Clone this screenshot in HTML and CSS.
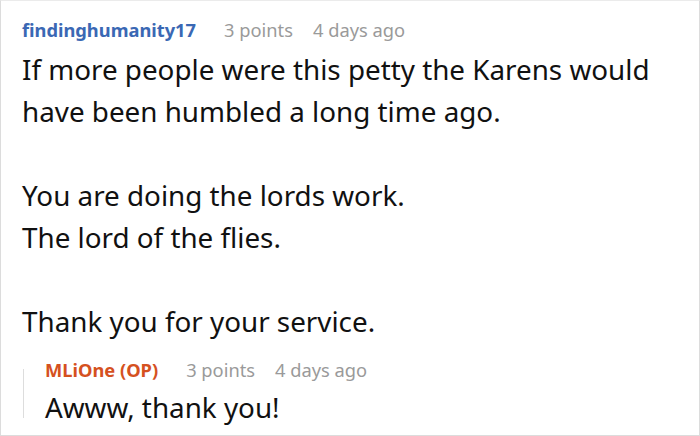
FILE: index.html
```html
<!DOCTYPE html>
<html>
<head>
<meta charset="utf-8">
<link rel="stylesheet" href="styles.css">
</head>
<body>
<div class="frame">
  <div class="comment">
    <div class="meta">
      <span class="author">findinghumanity17</span>
      <span class="info">3 points</span>
      <span class="info">4 days ago</span>
    </div>
    <div class="text">
      <p>If more people were this petty the Karens would have been humbled a long time ago.</p>
      <p>You are doing the lords work.<br>The lord of the flies.</p>
      <p>Thank you for your service.</p>
    </div>
    <div class="reply">
      <div class="meta">
        <span class="author op">MLiOne (OP)</span>
        <span class="info">3 points</span>
        <span class="info">4 days ago</span>
      </div>
      <div class="text">
        <p>Awww, thank you!</p>
      </div>
    </div>
  </div>
</div>
</body>
</html>
```
FILE: styles.css
```css
html, body {
  margin: 0;
  padding: 0;
  background: #fff;
}
.frame {
  width: 700px;
  height: 436px;
  box-sizing: border-box;
  border: 1px solid #dcdcdc;
  border-top-color: #ebebeb;
  overflow: hidden;
  font-family: "Noto Sans", "Open Sans", sans-serif;
}
.comment {
  padding: 17px 10px 0 21px;
}
.meta {
  display: flex;
  gap: 20px;
  align-items: baseline;
  font-size: 18.3px;
  line-height: 24px;
}
.author {
  font-weight: 700;
  color: #3a68b4;
  margin-right: 8px;
}
.author.op {
  color: #d5511f;
}
.info {
  color: #9a9a9a;
}
.text {
  margin-top: 6px;
  font-size: 27.8px;
  line-height: 42px;
  color: #111;
}
.text p {
  margin: 0 0 42px 0;
}
.text p:last-child {
  margin-bottom: 0;
}
.reply {
  position: relative;
  margin-top: 16px;
  padding-left: 23px;
}
.reply::before {
  content: "";
  position: absolute;
  left: 1px;
  top: 11px;
  bottom: 10px;
  width: 1px;
  background: #dddddd;
}
.reply .text {
  margin-top: 4px;
}
```
